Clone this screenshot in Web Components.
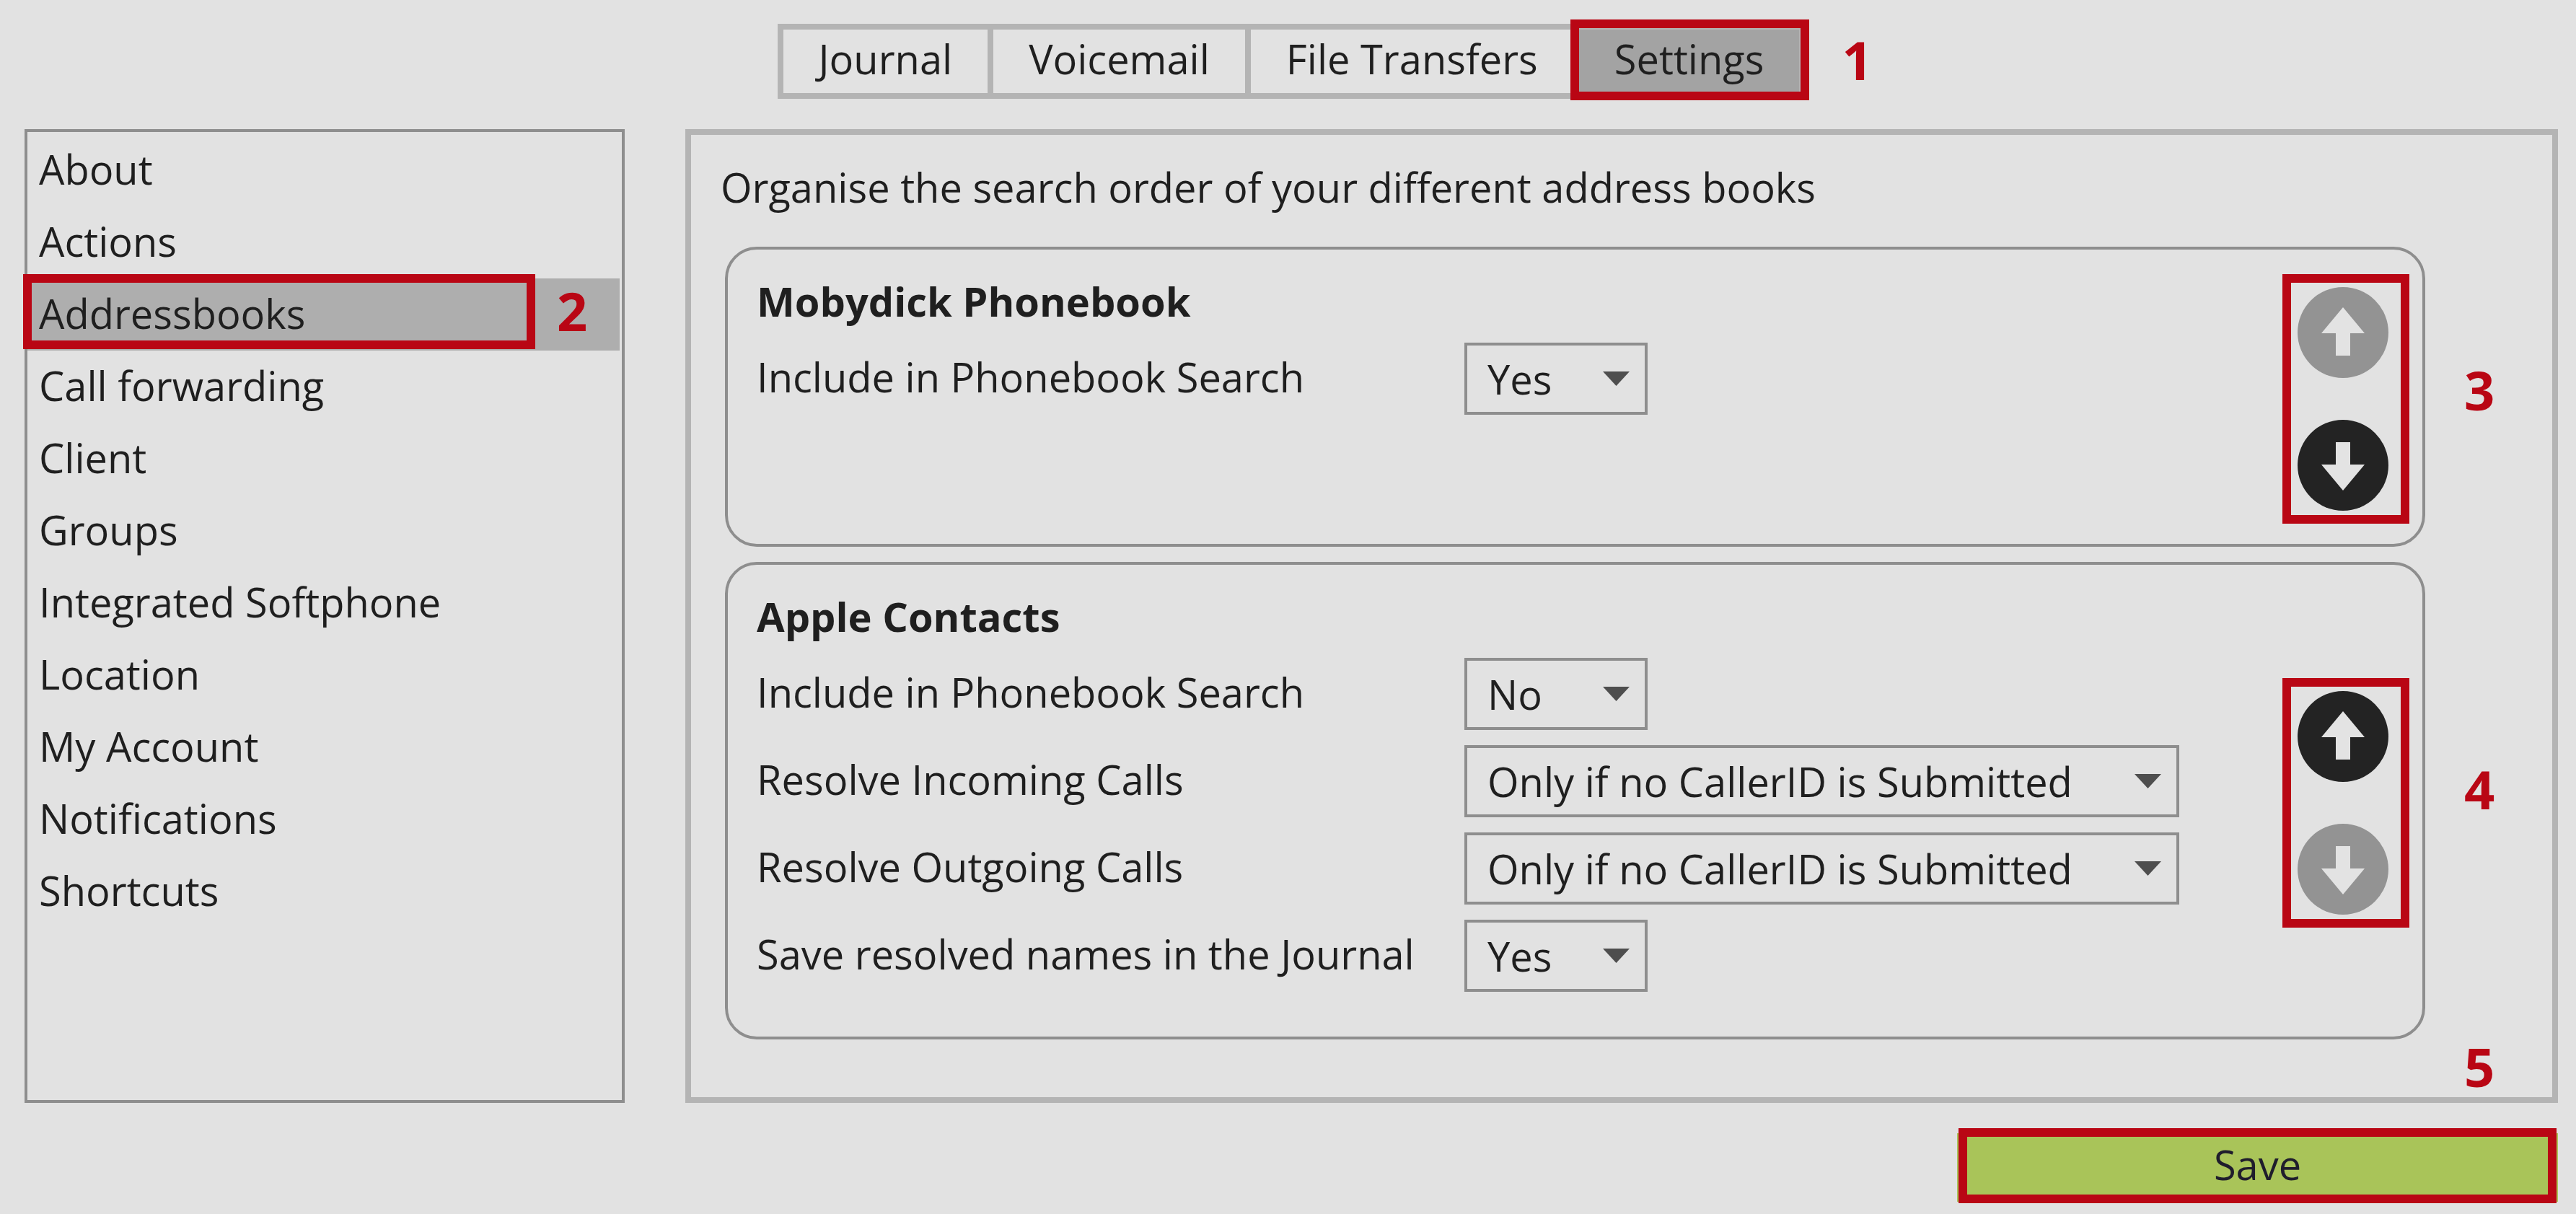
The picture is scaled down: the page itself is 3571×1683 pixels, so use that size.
<!DOCTYPE html>
<html lang="en">
<head>
<meta charset="utf-8">
<title>Settings – Addressbooks</title>
<style>
  :root {
    --bg: #e2e2e2;
    --ink: #1f1f1f;
    --line: #8e8e8e;
    --frame: #b4b4b4;
    --mark: #b90614;
  }
  body {
    margin: 0;
    background: var(--bg);
    color: var(--ink);
    font: 400 56px/94px "Open Sans", "Noto Sans", sans-serif;
  }
</style>
</head>
<body>
<settings-page></settings-page>

<script>
const define = (name, html, setup) => {
  const template = document.createElement('template');
  template.innerHTML = html;
  customElements.define(name, class extends HTMLElement {
    constructor() {
      super();
      this.attachShadow({ mode: 'open' }).append(template.content.cloneNode(true));
    }
    connectedCallback() {
      if (setup && !this.ready) {
        this.ready = true;
        setup(this, this.shadowRoot);
      }
    }
  });
};

/* Numbered red frame laid over whatever is slotted in. */
define('call-out', `
  <style>
    :host { display: block; position: relative; }
    .frame {
      position: absolute;
      inset: var(--inset, 0);
      border: 12px solid var(--mark);
      pointer-events: none;
      z-index: 1;
    }
    .number {
      position: absolute;
      left: calc(100% + var(--number-x, 0px));
      top: var(--number-y, 0px);
      color: var(--mark);
      font-size: 74px;
      line-height: 74px;
      font-weight: 700;
    }
  </style>
  <slot></slot>
  <div class="frame"><span class="number"></span></div>
`, (host, root) => {
  root.querySelector('.number').textContent = host.getAttribute('number');
});

define('tab-bar', `
  <style>
    :host {
      display: flex;
      gap: 8px;
      border: 8px solid var(--frame);
      background: var(--frame);
    }
  </style>
  <slot></slot>
`);

define('tab-item', `
  <style>
    :host { display: block; }
    button {
      display: block;
      height: 88px;
      margin: 0;
      padding: 0 49px 8px;
      border: 0;
      background: var(--bg);
      color: inherit;
      font: inherit;
      line-height: 80px;
      white-space: nowrap;
    }
    :host([selected]) button { background: #a3a3a3; }
  </style>
  <button type="button"><slot></slot></button>
`);

define('side-menu', `
  <style>
    :host {
      display: block;
      box-sizing: border-box;
      border: 4px solid var(--line);
      padding: 3px 3px 3px 0;
    }
    nav { display: flex; flex-direction: column; }
  </style>
  <nav aria-label="Settings sections"><slot></slot></nav>
`);

define('menu-entry', `
  <style>
    :host { display: block; }
    a {
      display: block;
      padding: 0 16px 4px;
      color: inherit;
      line-height: 96px;
      text-decoration: none;
    }
    :host([selected]) a { background: #aeaeae; }
  </style>
  <a href="#"><slot></slot></a>
`);

define('setting-row', `
  <style>
    :host { display: grid; grid-template-columns: 981px 1fr; }
    .field { display: grid; width: 254px; }
    :host([wide]) .field { width: 991px; }
    select, svg { grid-area: 1 / 1; }
    select {
      appearance: none;
      box-sizing: border-box;
      width: 100%;
      height: 100px;
      margin: 0;
      padding: 0 72px 0 28px;
      border: 4px solid var(--line);
      border-radius: 0;
      background: var(--bg);
      color: inherit;
      font: inherit;
      line-height: 92px;
    }
    svg {
      align-self: center;
      justify-self: end;
      width: 37px;
      height: 20px;
      margin-right: 25px;
      pointer-events: none;
    }
  </style>
  <label for="field"></label>
  <div class="field">
    <select id="field"></select>
    <svg viewBox="0 0 37 20" aria-hidden="true"><path d="M0 0H37L18.5 20Z" fill="#4e4e4e"/></svg>
  </div>
`, (host, root) => {
  root.querySelector('label').textContent = host.getAttribute('label');
  root.querySelector('select').add(new Option(host.getAttribute('value')));
});

define('move-button', `
  <style>
    :host { display: block; }
    button {
      display: block;
      width: 126px;
      height: 126px;
      padding: 0;
      border: 0;
      border-radius: 50%;
      background: #232323;
    }
    button:disabled { background: #939393; }
    svg { display: block; width: 100%; height: 100%; }
    :host([direction="down"]) svg { transform: rotate(180deg); }
  </style>
  <button type="button">
    <svg viewBox="0 0 126 126" aria-hidden="true"><path d="M63 28L93 64H73V95H53V64H33Z" fill="#e3e3e3"/></svg>
  </button>
`, (host, root) => {
  const button = root.querySelector('button');
  button.disabled = host.hasAttribute('disabled');
  button.setAttribute('aria-label', 'Move ' + host.getAttribute('direction'));
});

define('book-card', `
  <style>
    :host {
      display: flex;
      justify-content: space-between;
      box-sizing: border-box;
      min-height: 416px;
      border: 4px solid var(--line);
      border-radius: 44px;
      padding: 0 47px 0 40px;
    }
    .body { padding: 24px 0 62px; }
    h2 {
      margin: 0 0 11px;
      font-size: 56px;
      font-weight: 700;
    }
    .rows { display: flex; flex-direction: column; gap: 21px; }
    .order { align-self: center; padding-top: 6px; }
  </style>
  <div class="body">
    <h2></h2>
    <div class="rows"><slot></slot></div>
  </div>
  <div class="order"><slot name="order"></slot></div>
`, (host, root) => {
  root.querySelector('h2').textContent = host.getAttribute('heading');
});

define('order-buttons', `
  <style>
    :host { display: flex; flex-direction: column; gap: 58px; }
  </style>
  <slot></slot>
`);

define('save-button', `
  <style>
    :host { display: block; }
    button {
      display: block;
      width: 100%;
      height: 95px;
      margin: 0;
      padding: 0 0 8px;
      border: 0;
      background: #a9c459;
      color: #1f1d2c;
      font: inherit;
      line-height: 87px;
    }
  </style>
  <button type="submit"><slot></slot></button>
`);

define('settings-page', `
  <style>
    :host {
      display: flex;
      flex-direction: column;
      align-items: stretch;
      padding: 33px 25px 17px 34px;
    }
    header { display: flex; justify-content: center; margin-bottom: 42px; }
    main { display: flex; gap: 84px; }
    side-menu { flex: 0 0 832px; }
    .panel {
      flex: 1;
      min-width: 0;
      border: 8px solid var(--frame);
      padding: 25px 176px 80px 47px;
    }
    p { margin: 0 0 36px -6px; }
    .cards { display: flex; flex-direction: column; gap: 21px; }
    footer { display: flex; justify-content: flex-end; margin-top: 42px; }
    .save { width: 833px; }

    .tab { --inset: -14px -14px -10px -12px; --number-x: 57px; --number-y: 7px; }
    .entry { --inset: -6px 117px 2px -6px; --number-x: 42px; --number-y: 2px; }
    .order { --inset: -18px -29px -18px -21px; --number-x: 88px; }
    .order[number="3"] { --number-y: 112px; }
    .order[number="4"] { --number-y: 105px; }
    .save { --inset: -7px 2px -2px 2px; --number-x: -116px; --number-y: -134px; }
  </style>
  <header>
    <tab-bar>
      <tab-item>Journal</tab-item>
      <tab-item>Voicemail</tab-item>
      <tab-item>File Transfers</tab-item>
      <call-out class="tab" number="1"><tab-item selected>Settings</tab-item></call-out>
    </tab-bar>
  </header>
  <main>
    <side-menu>
      <menu-entry>About</menu-entry>
      <menu-entry>Actions</menu-entry>
      <call-out class="entry" number="2"><menu-entry selected>Addressbooks</menu-entry></call-out>
      <menu-entry>Call forwarding</menu-entry>
      <menu-entry>Client</menu-entry>
      <menu-entry>Groups</menu-entry>
      <menu-entry>Integrated Softphone</menu-entry>
      <menu-entry>Location</menu-entry>
      <menu-entry>My Account</menu-entry>
      <menu-entry>Notifications</menu-entry>
      <menu-entry>Shortcuts</menu-entry>
    </side-menu>
    <section class="panel">
      <p>Organise the search order of your different address books</p>
      <div class="cards">
        <book-card heading="Mobydick Phonebook">
          <setting-row label="Include in Phonebook Search" value="Yes"></setting-row>
          <call-out class="order" slot="order" number="3">
            <order-buttons>
              <move-button direction="up" disabled></move-button>
              <move-button direction="down"></move-button>
            </order-buttons>
          </call-out>
        </book-card>
        <book-card heading="Apple Contacts">
          <setting-row label="Include in Phonebook Search" value="No"></setting-row>
          <setting-row wide label="Resolve Incoming Calls" value="Only if no CallerID is Submitted"></setting-row>
          <setting-row wide label="Resolve Outgoing Calls" value="Only if no CallerID is Submitted"></setting-row>
          <setting-row label="Save resolved names in the Journal" value="Yes"></setting-row>
          <call-out class="order" slot="order" number="4">
            <order-buttons>
              <move-button direction="up"></move-button>
              <move-button direction="down" disabled></move-button>
            </order-buttons>
          </call-out>
        </book-card>
      </div>
    </section>
  </main>
  <footer>
    <call-out class="save" number="5"><save-button>Save</save-button></call-out>
  </footer>
`);
</script>
</body>
</html>
